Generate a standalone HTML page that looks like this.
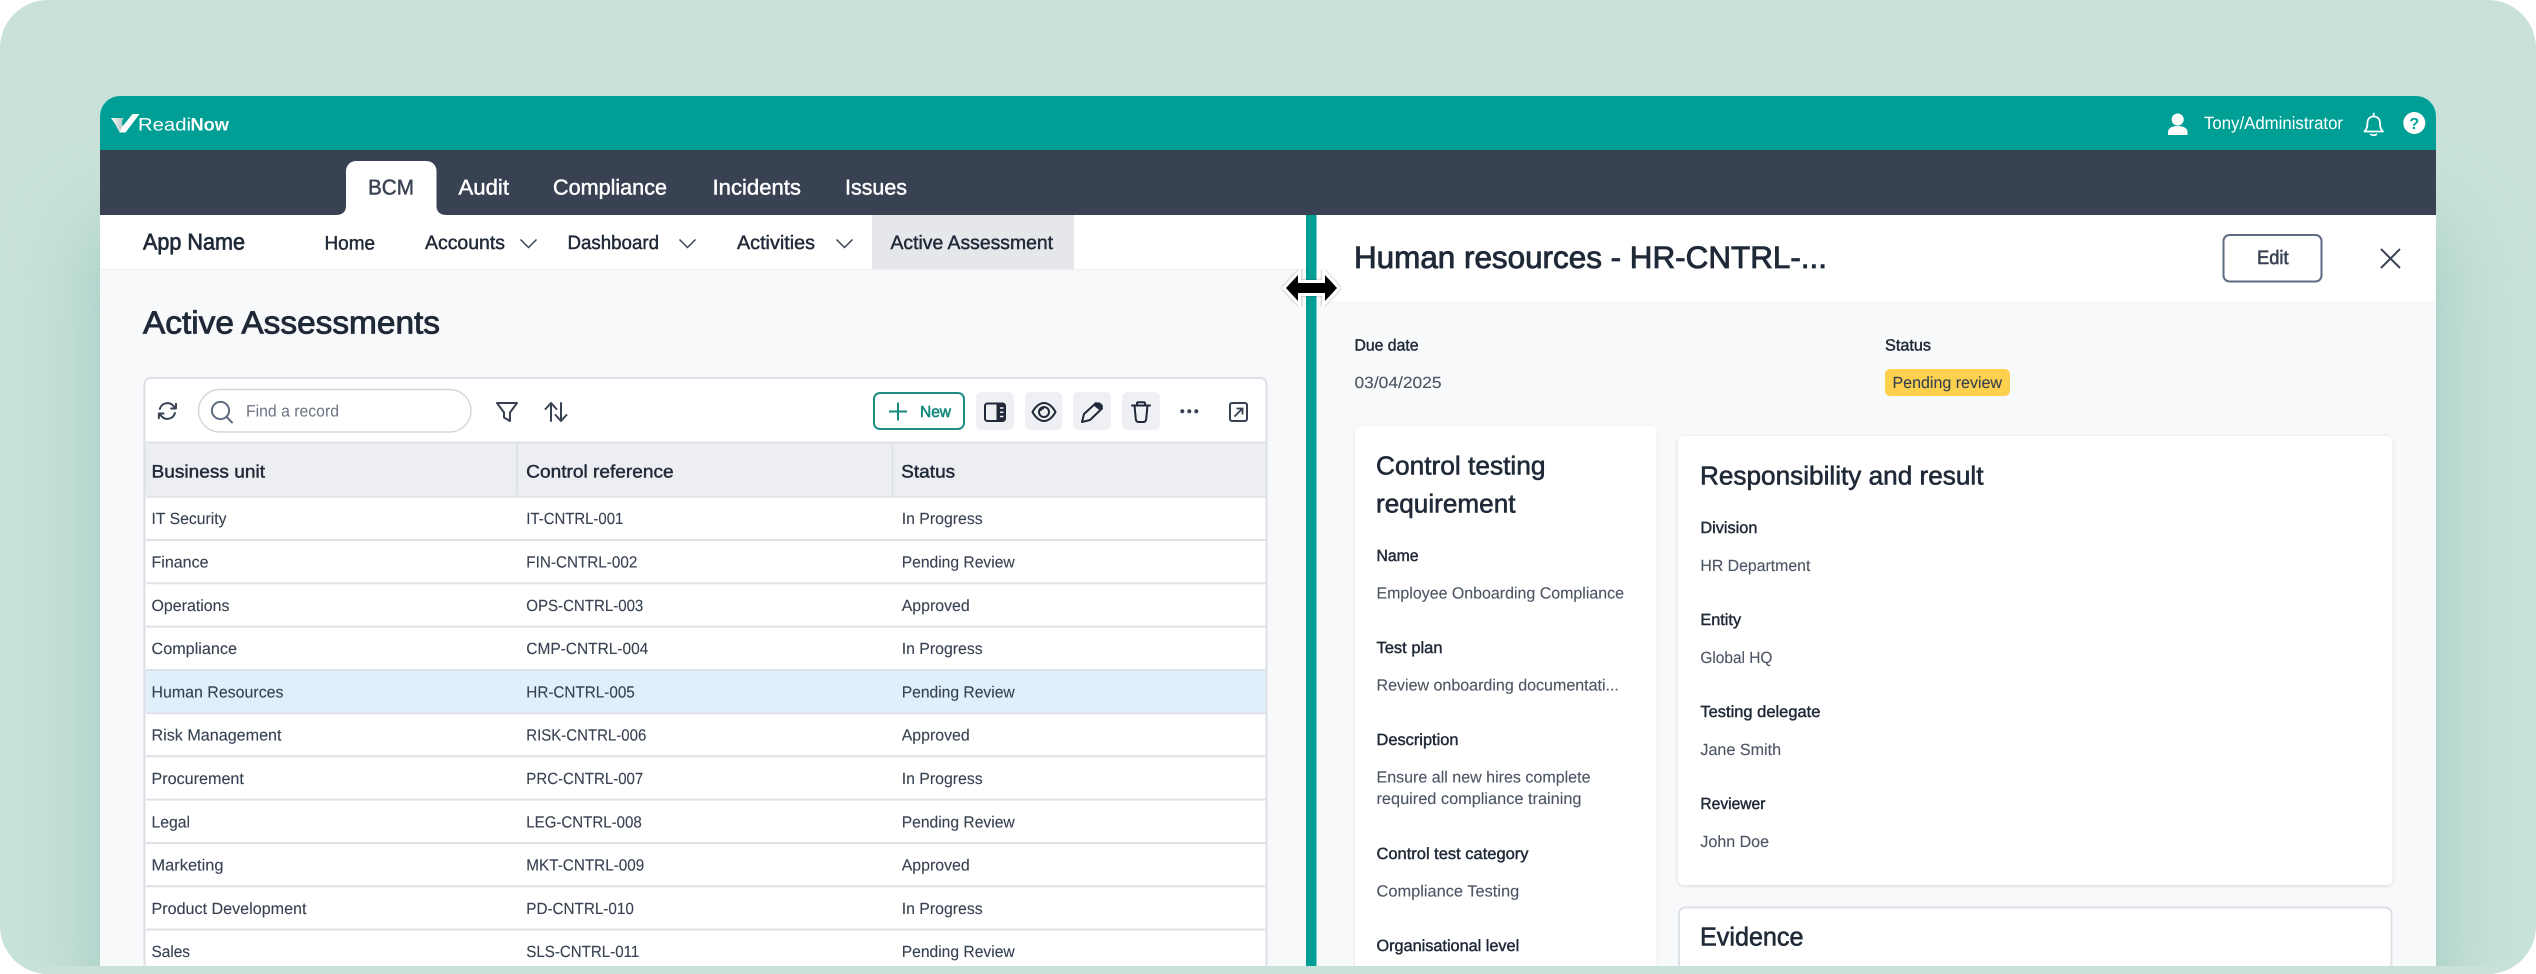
<!DOCTYPE html>
<html lang="en">
<head>
<meta charset="utf-8">
<title>Active Assessments</title>
<style>
html,body{margin:0;padding:0;background:#fff;width:2536px;height:974px;overflow:hidden}
svg{display:block}
text{font-family:"Liberation Sans",Arial,sans-serif;text-rendering:geometricPrecision;white-space:pre}
.m{stroke:currentColor;stroke-width:.45px}
.big{stroke-width:.7px}
.nav{font-size:21.5px;fill:#fff;color:#fff}
.sub{font-size:19.4px;fill:#1f2937;color:#1f2937}
.td{font-size:16.2px;fill:#374151;stroke:#374151;stroke-width:.12px;transform:translateY(-.6px)}
.th{font-size:18px;fill:#1f2937;color:#1f2937}
.lb{font-size:16.2px;fill:#1f2937;color:#1f2937}
.vl{font-size:16.2px;fill:#4b5563;stroke:#4b5563;stroke-width:.12px;transform:translateY(-.5px)}
.h2{font-size:26px;fill:#1f2937;color:#1f2937;stroke-width:.6px}
.ic{fill:none;stroke:#374151;stroke-width:2;stroke-linecap:round;stroke-linejoin:round}
.ln{stroke:#dfe2e9;stroke-width:2}
</style>
</head>
<body>
<svg xmlns="http://www.w3.org/2000/svg" width="2536" height="974" viewBox="0 0 2536 974">
<defs>
<filter id="blur" x="-10%" y="-30%" width="120%" height="160%"><feMorphology operator="dilate" radius="0 60"/><feGaussianBlur stdDeviation="42"/></filter>
<filter id="cs" x="-5%" y="-5%" width="110%" height="110%"><feDropShadow dx="0" dy="1" stdDeviation="2" flood-color="#000" flood-opacity=".12"/></filter>
<filter id="cs2" x="-5%" y="-5%" width="110%" height="110%"><feDropShadow dx="0" dy="1" stdDeviation="1.5" flood-color="#000" flood-opacity=".09"/></filter>
<filter id="cur" x="-20%" y="-20%" width="140%" height="140%"><feDropShadow dx="0" dy="0" stdDeviation="1.2" flood-color="#000" flood-opacity=".35"/></filter>
<clipPath id="page"><rect width="2536" height="974" rx="48"/></clipPath>
<clipPath id="shclip"><rect x="0" y="0" width="2536" height="966"/></clipPath>
<clipPath id="app"><path d="M100 966V116a20 20 0 0 1 20-20H2416a20 20 0 0 1 20 20V966Z"/></clipPath>
<linearGradient id="chk" x1="0" y1="0" x2="1" y2="0"><stop offset="0" stop-color="#fff"/><stop offset="1" stop-color="#aebfbd"/></linearGradient>
</defs>

<!-- page bg -->
<g clip-path="url(#page)">
<rect width="2536" height="974" fill="#c8e2da"/>
<g clip-path="url(#shclip)"><rect x="100" y="290" width="2336" height="680" fill="#9ac7bd" filter="url(#blur)"/></g>
</g>

<g clip-path="url(#app)">
<rect x="100" y="96" width="2336" height="870" fill="#f8f9fb"/>
<rect x="100" y="96" width="2336" height="54" fill="#009f96"/>
<rect x="100" y="150" width="2336" height="65" fill="#394253"/>

<!-- logo -->
<path d="M111 118H124C121 121 122 125 123.500 127L119.500 132.500C117 127 114 122 111 118Z" fill="url(#chk)"/>
<path d="M119.500 132.500H125.500L139.500 114H132.500L122 127Z" fill="#fff"/>
<text x="138" y="130.500" font-size="18" fill="#fff" textLength="53" lengthAdjust="spacingAndGlyphs">Readi</text>
<text x="190.500" y="130.500" font-size="18" font-weight="700" fill="#fff" textLength="38.500" lengthAdjust="spacingAndGlyphs">Now</text>

<!-- user area -->
<circle cx="2177.700" cy="119.500" r="6" fill="#fff"/>
<path d="M2168 135V132.500C2168 128 2172 126 2177.700 126S2187.500 128 2187.500 132.500V135Z" fill="#fff"/>
<text x="2204" y="129" font-size="17.800" fill="#fff" textLength="139" lengthAdjust="spacingAndGlyphs">Tony/Administrator</text>
<path d="M2373.700 116.500c-4.200 0-6.300 3-6.300 7 0 4.800-1.400 6.600-3 8h18.600c-1.600-1.400-3-3.200-3-8 0-4-2.100-7-6.300-7ZM2373.700 113.500v3M2371 134.500q2.700 1.400 5.400 0" fill="none" stroke="#fff" stroke-width="1.800" stroke-linecap="round" stroke-linejoin="round"/>
<circle cx="2414.300" cy="123" r="11" fill="#fff"/>
<text x="2414.300" y="129" font-size="16" font-weight="700" fill="#009f96" text-anchor="middle">?</text>

<!-- main nav -->
<path d="M336 215c6 0 10-3 10-9V171a10 10 0 0 1 10-10h70.500a10 10 0 0 1 10 10v35c0 6 4 9 10 9Z" fill="#fff"/>
<text class="nav m" x="368" y="194.500" textLength="46" lengthAdjust="spacingAndGlyphs" style="fill:#394253;color:#394253">BCM</text>
<text class="nav m" x="458.500" y="194.500" textLength="50.500" lengthAdjust="spacingAndGlyphs">Audit</text>
<text class="nav m" x="553" y="194.500" textLength="114" lengthAdjust="spacingAndGlyphs">Compliance</text>
<text class="nav m" x="712.500" y="194.500" textLength="88.500" lengthAdjust="spacingAndGlyphs">Incidents</text>
<text class="nav m" x="845" y="194.500" textLength="62" lengthAdjust="spacingAndGlyphs">Issues</text>

<!-- sub nav -->
<rect x="100" y="215" width="1206" height="54" fill="#fff"/>
<rect x="100" y="269" width="1206" height="1" fill="#eef0f3"/>
<rect x="872" y="215" width="202" height="54" fill="#e5e7eb"/>
<text class="m big" x="143" y="249.300" font-size="22.800" fill="#1f2937" color="#1f2937" textLength="102" lengthAdjust="spacingAndGlyphs">App Name</text>
<text class="sub m" x="324.500" y="249.300" textLength="50.500" lengthAdjust="spacingAndGlyphs">Home</text>
<text class="sub m" x="425" y="249" textLength="80" lengthAdjust="spacingAndGlyphs">Accounts</text>
<path d="M520.500 239.500L528.500 247.500L536.500 239.500" fill="none" stroke="#374151" stroke-width="1.500"/>
<text class="sub m" x="567.500" y="249" textLength="91.500" lengthAdjust="spacingAndGlyphs">Dashboard</text>
<path d="M679.500 239.500L687.500 247.500L695.500 239.500" fill="none" stroke="#374151" stroke-width="1.500"/>
<text class="sub m" x="737" y="249" textLength="78" lengthAdjust="spacingAndGlyphs">Activities</text>
<path d="M836.500 239.500L844.500 247.500L852.500 239.500" fill="none" stroke="#374151" stroke-width="1.500"/>
<text class="sub m" x="890.500" y="249" textLength="162.500" lengthAdjust="spacingAndGlyphs">Active Assessment</text>

<!-- heading -->
<text class="m big" x="143" y="333.500" font-size="32" fill="#1f2937" color="#1f2937" textLength="297" lengthAdjust="spacingAndGlyphs" style="stroke-width:.85px">Active Assessments</text>

<!-- table card -->
<rect x="144.500" y="378" width="1122" height="596" rx="6" fill="#fff" stroke="#dcdfe6" stroke-width="2"/>
<rect x="145.500" y="443" width="1120" height="53" fill="#edeef2"/>
<line x1="146" x2="1266" y1="442.500" y2="442.500" class="ln"/>
<line x1="146" x2="1266" y1="496.700" y2="496.700" class="ln"/>
<line x1="517" x2="517" y1="443" y2="496" stroke="#dcdfe6" stroke-width="1.500"/>
<line x1="892.500" x2="892.500" y1="443" y2="496" stroke="#dcdfe6" stroke-width="1.500"/>

<!-- toolbar -->
<g transform="translate(156 399.600) scale(.95)"><path class="ic" d="M16.023 9.348h4.992v-.001M2.985 19.644v-4.992m0 0h4.992m-4.993 0l3.181 3.183a8.250 8.250 0 0013.803-3.700M4.031 9.865a8.250 8.250 0 0113.803-3.700l3.181 3.182m0-4.991v4.990" style="stroke-width:2.100"/></g>
<rect x="198.500" y="389.500" width="272.500" height="42.500" rx="21.250" fill="#fff" stroke="#d3d6de" stroke-width="1.500"/>
<circle cx="220.500" cy="410.500" r="8.600" fill="none" stroke="#5f6b80" stroke-width="2"/>
<line x1="226.700" y1="417" x2="232" y2="422.500" stroke="#5f6b80" stroke-width="2" stroke-linecap="round"/>
<text x="246" y="416.300" font-size="16.500" fill="#6b7280" textLength="93" lengthAdjust="spacingAndGlyphs">Find a record</text>
<path class="ic" d="M497 403H517L510 412.500V421L504 417.500V412.500Z"/>
<path class="ic" d="M551 421V403M545.500 409L551 403L556.500 409M561 403V421M555.500 415L561 421L566.500 415"/>

<rect x="874" y="393" width="90" height="36" rx="6" fill="#fff" stroke="#1f8f84" stroke-width="2"/>
<path d="M889 411.500H907M898 402.500V420.500" stroke="#148a7e" stroke-width="2" fill="none"/>
<text class="m" x="920" y="417" font-size="16" fill="#148a7e" color="#148a7e" textLength="31" lengthAdjust="spacingAndGlyphs" style="stroke-width:.6px">New</text>

<rect x="976" y="392" width="38" height="38" rx="6" fill="#eef0f4"/>
<rect x="1025" y="392" width="37.500" height="38" rx="6" fill="#eef0f4"/>
<rect x="1073" y="392" width="38" height="38" rx="6" fill="#eef0f4"/>
<rect x="1122" y="392" width="38" height="38" rx="6" fill="#eef0f4"/>

<rect x="985" y="403.500" width="20" height="17.500" rx="2.500" fill="none" stroke="#1f2937" stroke-width="2"/>
<path d="M996.500 403.500H1002.500A2.500 2.500 0 0 1 1005 406V418.500A2.500 2.500 0 0 1 1002.500 421H996.500Z" fill="#1f2937"/>
<path d="M1000 408H1003.500M1000 412.300H1003.500M1000 416.500H1003.500" stroke="#eef0f4" stroke-width="1.500"/>

<path d="M1032.500 412C1036 405.500 1040.500 403 1044 403S1052 405.500 1055.500 412C1052 418.500 1047.500 421 1044 421S1036 418.500 1032.500 412Z" fill="none" stroke="#1f2937" stroke-width="2" stroke-linejoin="round"/>
<circle cx="1044" cy="412" r="5" fill="none" stroke="#1f2937" stroke-width="2"/>
<path d="M1040.500 411A3.500 3.500 0 0 1 1044 408.500" fill="none" stroke="#1f2937" stroke-width="1.500"/>

<path d="M1082 422L1084 414L1096 403L1102 408.500L1090 420Z" fill="none" stroke="#1f2937" stroke-width="2" stroke-linejoin="round"/>
<path d="M1095.500 403.500Q1098 401.500 1100.500 403L1102.500 405Q1103.500 407 1102 408.500L1100 410.500L1093.500 405.500Z" fill="#1f2937"/>

<path d="M1132 405.500H1150M1137 405V403.500Q1137 402.300 1138.500 402.300H1143.500Q1145 402.300 1145 403.500V405M1134.500 405.500L1135.800 419Q1136.200 422 1138.500 422H1143.500Q1145.800 422 1146.200 419L1147.500 405.500" fill="none" stroke="#1f2937" stroke-width="2" stroke-linecap="round" stroke-linejoin="round"/>

<circle cx="1182.300" cy="411.300" r="2" fill="#374151"/>
<circle cx="1189.300" cy="411.300" r="2" fill="#374151"/>
<circle cx="1196.300" cy="411.300" r="2" fill="#374151"/>

<rect x="1230" y="403" width="17" height="18" rx="2" fill="none" stroke="#374151" stroke-width="2"/>
<path d="M1234.500 416.500L1242 409M1236.500 408.500H1242.500V414.500" fill="none" stroke="#374151" stroke-width="1.800"/>

<!-- table head -->
<text class="th m" x="151.500" y="477.300" textLength="113.500" lengthAdjust="spacingAndGlyphs">Business unit</text>
<text class="th m" x="526.200" y="477.300" textLength="147.500" lengthAdjust="spacingAndGlyphs">Control reference</text>
<text class="th m" x="901.200" y="477.300" textLength="54" lengthAdjust="spacingAndGlyphs">Status</text>

<!-- selected row -->
<rect x="145.500" y="670" width="1120" height="43" fill="#dff0fb"/>

<!-- row lines -->
<g class="ln">
<line x1="146" x2="1266" y1="540" y2="540"/>
<line x1="146" x2="1266" y1="583.300" y2="583.300"/>
<line x1="146" x2="1266" y1="626.600" y2="626.600"/>
<line x1="146" x2="1266" y1="670" y2="670"/>
<line x1="146" x2="1266" y1="713.200" y2="713.200"/>
<line x1="146" x2="1266" y1="756.300" y2="756.300"/>
<line x1="146" x2="1266" y1="799.600" y2="799.600"/>
<line x1="146" x2="1266" y1="843" y2="843"/>
<line x1="146" x2="1266" y1="886.200" y2="886.200"/>
<line x1="146" x2="1266" y1="929.500" y2="929.500"/>
</g>

<!-- rows -->
<text class="td" x="151.500" y="524.800" textLength="75" lengthAdjust="spacingAndGlyphs">IT Security</text>
<text class="td" x="526.300" y="524.800" textLength="97" lengthAdjust="spacingAndGlyphs">IT-CNTRL-001</text>
<text class="td" x="901.700" y="524.800" textLength="81" lengthAdjust="spacingAndGlyphs">In Progress</text>

<text class="td" x="151.500" y="568.100" textLength="57" lengthAdjust="spacingAndGlyphs">Finance</text>
<text class="td" x="526.300" y="568.100" textLength="111" lengthAdjust="spacingAndGlyphs">FIN-CNTRL-002</text>
<text class="td" x="901.700" y="568.100" textLength="113" lengthAdjust="spacingAndGlyphs">Pending Review</text>

<text class="td" x="151.500" y="611.400" textLength="78" lengthAdjust="spacingAndGlyphs">Operations</text>
<text class="td" x="526.300" y="611.400" textLength="117" lengthAdjust="spacingAndGlyphs">OPS-CNTRL-003</text>
<text class="td" x="901.700" y="611.400" textLength="68" lengthAdjust="spacingAndGlyphs">Approved</text>

<text class="td" x="151.500" y="654.700" textLength="85.500" lengthAdjust="spacingAndGlyphs">Compliance</text>
<text class="td" x="526.300" y="654.700" textLength="122" lengthAdjust="spacingAndGlyphs">CMP-CNTRL-004</text>
<text class="td" x="901.700" y="654.700" textLength="81" lengthAdjust="spacingAndGlyphs">In Progress</text>

<text class="td" x="151.500" y="698" textLength="132" lengthAdjust="spacingAndGlyphs">Human Resources</text>
<text class="td" x="526.300" y="698" textLength="108.500" lengthAdjust="spacingAndGlyphs">HR-CNTRL-005</text>
<text class="td" x="901.700" y="698" textLength="113" lengthAdjust="spacingAndGlyphs">Pending Review</text>

<text class="td" x="151.500" y="741.300" textLength="130" lengthAdjust="spacingAndGlyphs">Risk Management</text>
<text class="td" x="526.300" y="741.300" textLength="120" lengthAdjust="spacingAndGlyphs">RISK-CNTRL-006</text>
<text class="td" x="901.700" y="741.300" textLength="68" lengthAdjust="spacingAndGlyphs">Approved</text>

<text class="td" x="151.500" y="784.600" textLength="92.400" lengthAdjust="spacingAndGlyphs">Procurement</text>
<text class="td" x="526.300" y="784.600" textLength="117" lengthAdjust="spacingAndGlyphs">PRC-CNTRL-007</text>
<text class="td" x="901.700" y="784.600" textLength="81" lengthAdjust="spacingAndGlyphs">In Progress</text>

<text class="td" x="151.500" y="827.900" textLength="38.500" lengthAdjust="spacingAndGlyphs">Legal</text>
<text class="td" x="526.300" y="827.900" textLength="115.400" lengthAdjust="spacingAndGlyphs">LEG-CNTRL-008</text>
<text class="td" x="901.700" y="827.900" textLength="113" lengthAdjust="spacingAndGlyphs">Pending Review</text>

<text class="td" x="151.500" y="871.200" textLength="72" lengthAdjust="spacingAndGlyphs">Marketing</text>
<text class="td" x="526.300" y="871.200" textLength="118" lengthAdjust="spacingAndGlyphs">MKT-CNTRL-009</text>
<text class="td" x="901.700" y="871.200" textLength="68" lengthAdjust="spacingAndGlyphs">Approved</text>

<text class="td" x="151.500" y="914.500" textLength="155" lengthAdjust="spacingAndGlyphs">Product Development</text>
<text class="td" x="526.300" y="914.500" textLength="107.500" lengthAdjust="spacingAndGlyphs">PD-CNTRL-010</text>
<text class="td" x="901.700" y="914.500" textLength="81" lengthAdjust="spacingAndGlyphs">In Progress</text>

<text class="td" x="151.500" y="957.800" textLength="38.500" lengthAdjust="spacingAndGlyphs">Sales</text>
<text class="td" x="526.300" y="957.800" textLength="113" lengthAdjust="spacingAndGlyphs">SLS-CNTRL-011</text>
<text class="td" x="901.700" y="957.800" textLength="113" lengthAdjust="spacingAndGlyphs">Pending Review</text>

<!-- divider + right panel -->
<rect x="1306" y="215" width="10.500" height="751" fill="#009f96"/>
<rect x="1316.500" y="215" width="1119.500" height="751" fill="#f8f9fb"/>
<rect x="1316.500" y="215" width="1119.500" height="86" fill="#fff"/>

<text class="m big" x="1354" y="268" font-size="31" fill="#1f2937" color="#1f2937" textLength="473" lengthAdjust="spacingAndGlyphs" style="stroke-width:.85px">Human resources - HR-CNTRL-...</text>
<rect x="2223.500" y="235" width="98" height="46.500" rx="6" fill="#fff" stroke="#5f6b80" stroke-width="2"/>
<text class="m" x="2257" y="264" font-size="19.400" fill="#394253" color="#394253" textLength="31.600" lengthAdjust="spacingAndGlyphs" style="stroke-width:.6px">Edit</text>
<path d="M2381 249L2400 268M2400 249L2381 268" stroke="#394253" stroke-width="2" fill="none"/>

<text class="lb m" x="1354.500" y="350.700" textLength="64" lengthAdjust="spacingAndGlyphs">Due date</text>
<text class="vl" x="1354.500" y="388.300" textLength="87" lengthAdjust="spacingAndGlyphs">03/04/2025</text>
<text class="lb m" x="1885" y="350.700" textLength="46" lengthAdjust="spacingAndGlyphs">Status</text>
<rect x="1885" y="369" width="125" height="27" rx="5" fill="#fdd14d"/>
<text x="1892.500" y="388" font-size="16.200" fill="#374151" stroke="#374151" stroke-width=".12" textLength="109.500" lengthAdjust="spacingAndGlyphs">Pending review</text>

<!-- left card -->
<rect x="1355" y="426" width="301.500" height="548" rx="6" fill="#fff" filter="url(#cs2)"/>
<text class="h2 m" x="1376" y="474.700" textLength="169.500" lengthAdjust="spacingAndGlyphs">Control testing</text>
<text class="h2 m" x="1376" y="512.700" textLength="139.500" lengthAdjust="spacingAndGlyphs">requirement</text>
<text class="lb m" x="1376.500" y="561" textLength="42" lengthAdjust="spacingAndGlyphs">Name</text>
<text class="vl" x="1376.500" y="599" textLength="247.500" lengthAdjust="spacingAndGlyphs">Employee Onboarding Compliance</text>
<text class="lb m" x="1376.500" y="653" textLength="66" lengthAdjust="spacingAndGlyphs">Test plan</text>
<text class="vl" x="1376.500" y="691" textLength="242.400" lengthAdjust="spacingAndGlyphs">Review onboarding documentati...</text>
<text class="lb m" x="1376.500" y="745" textLength="82" lengthAdjust="spacingAndGlyphs">Description</text>
<text class="vl" x="1376.500" y="783" textLength="214" lengthAdjust="spacingAndGlyphs">Ensure all new hires complete</text>
<text class="vl" x="1376.500" y="804.600" textLength="205" lengthAdjust="spacingAndGlyphs">required compliance training</text>
<text class="lb m" x="1376.500" y="859" textLength="152" lengthAdjust="spacingAndGlyphs">Control test category</text>
<text class="vl" x="1376.500" y="897" textLength="142.700" lengthAdjust="spacingAndGlyphs">Compliance Testing</text>
<text class="lb m" x="1376.500" y="951" textLength="142.700" lengthAdjust="spacingAndGlyphs">Organisational level</text>

<!-- right card -->
<rect x="1678" y="436" width="714.500" height="449" rx="6" fill="#fff" filter="url(#cs)"/>
<text class="h2 m" x="1700" y="484.700" textLength="283.500" lengthAdjust="spacingAndGlyphs">Responsibility and result</text>
<text class="lb m" x="1700.400" y="533" textLength="57" lengthAdjust="spacingAndGlyphs">Division</text>
<text class="vl" x="1700.400" y="571.300" textLength="110" lengthAdjust="spacingAndGlyphs">HR Department</text>
<text class="lb m" x="1700.400" y="625" textLength="40.700" lengthAdjust="spacingAndGlyphs">Entity</text>
<text class="vl" x="1700.400" y="663.300" textLength="72" lengthAdjust="spacingAndGlyphs">Global HQ</text>
<text class="lb m" x="1700.400" y="717" textLength="120" lengthAdjust="spacingAndGlyphs">Testing delegate</text>
<text class="vl" x="1700.400" y="755.300" textLength="80.700" lengthAdjust="spacingAndGlyphs">Jane Smith</text>
<text class="lb m" x="1700.400" y="809" textLength="65" lengthAdjust="spacingAndGlyphs">Reviewer</text>
<text class="vl" x="1700.400" y="847.500" textLength="68.600" lengthAdjust="spacingAndGlyphs">John Doe</text>

<!-- evidence -->
<rect x="1679" y="907.500" width="712.500" height="66" rx="6" fill="#fff" stroke="#dfe1e8" stroke-width="2"/>
<text class="h2 m" x="1700" y="945.500" textLength="103.500" lengthAdjust="spacingAndGlyphs">Evidence</text>
</g>

<!-- resize cursor -->
<path d="M1286 288L1298 275V283H1325V275L1337 288L1325 301V293H1298V301Z" fill="#000" stroke="#fff" stroke-width="6" stroke-linejoin="miter" stroke-miterlimit="6" paint-order="stroke" filter="url(#cur)"/>
</svg>
</body>
</html>
